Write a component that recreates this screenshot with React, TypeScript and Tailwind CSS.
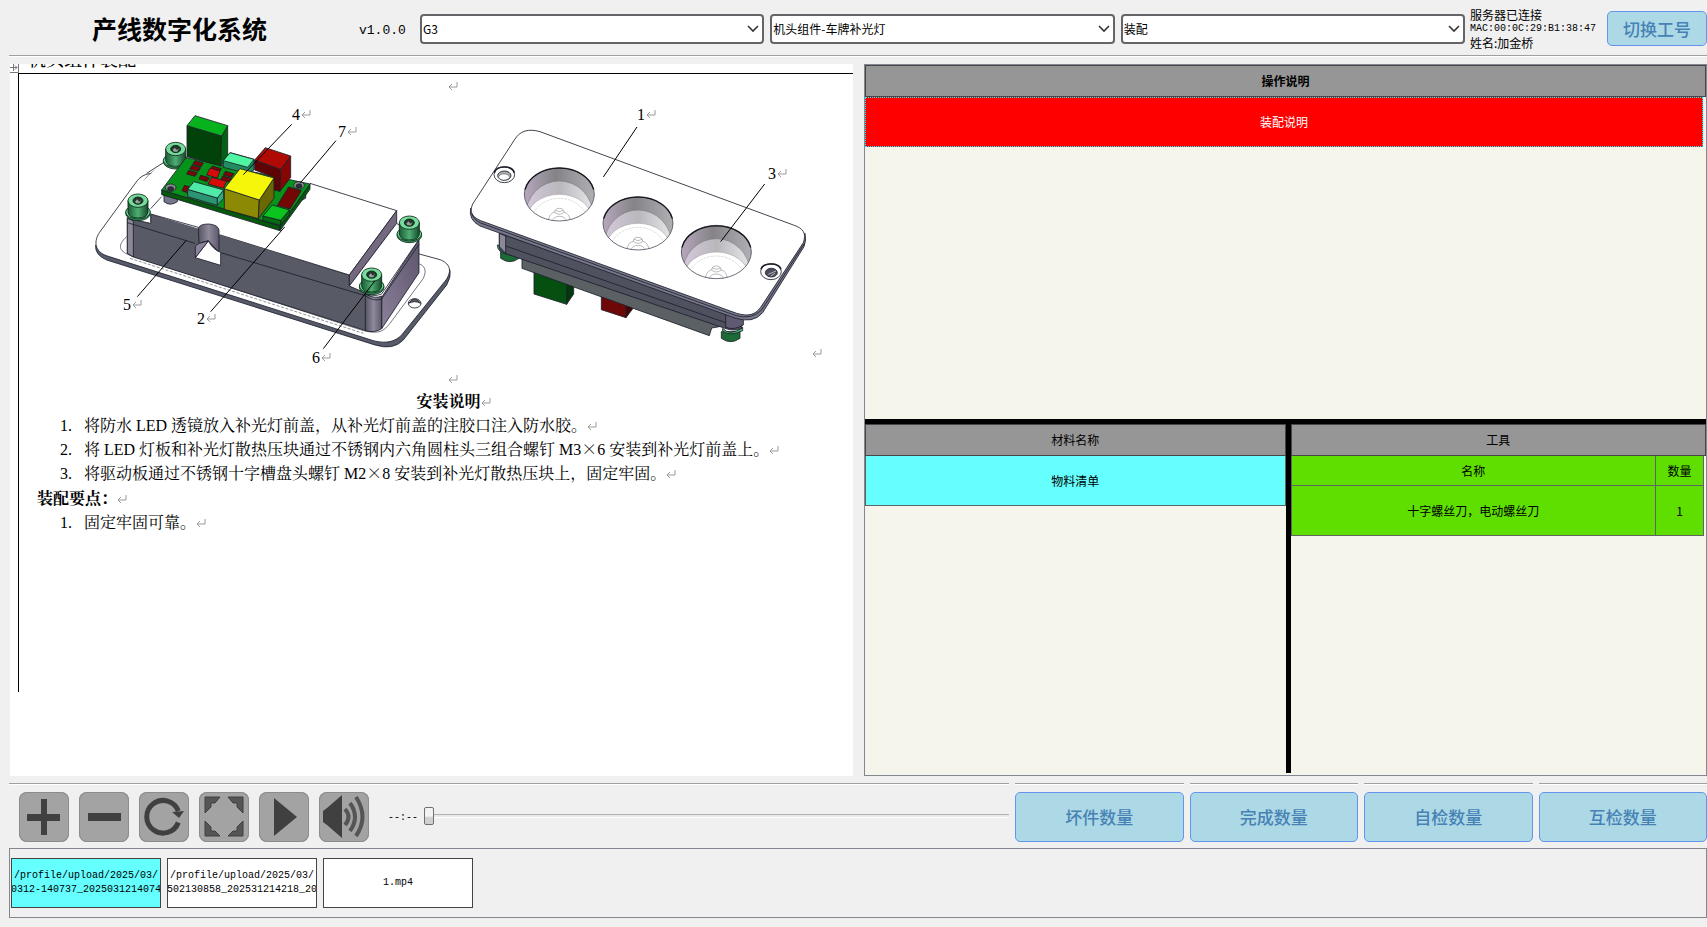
import React from "react";

const sans = "font-['Noto_Sans_CJK_SC',sans-serif]";
const mono = "font-['Liberation_Mono','Noto_Sans_CJK_SC',monospace]";
const serif = "font-['Liberation_Serif','Noto_Serif_CJK_SC','Noto_Sans_CJK_SC',serif]";

function Select({ label, value }: { label: string; value: string }) {
  return (
    <div className="relative min-w-0 flex-1">
      <select
        aria-label={label}
        defaultValue={value}
        className="block h-[30px] w-full appearance-none rounded-[4px] border-2 border-[#646469] bg-white pr-6 pl-px text-xs text-black"
      >
        <option>{value}</option>
      </select>
      <svg className="pointer-events-none absolute top-[11px] right-[5px]" width="12" height="8" viewBox="0 0 12 8" fill="none" stroke="#333" strokeWidth="1.6">
        <path d="M1 1 L6 6 L11 1" />
      </svg>
    </div>
  );
}

function Rule() {
  return <div className="h-[2px] w-full border-t border-[#a0a0a0] bg-white" />;
}

function MarkPath({ x, y }: { x: number; y: number }) {
  return (
    <path d={`M${x + 9} ${y - 4} V${y + 1} H${x + 1} M${x + 4} ${y - 2} L${x + 1} ${y + 1} L${x + 4} ${y + 4}`} fill="none" stroke="#9a9a9a" />
  );
}

function Mark() {
  return (
    <svg className="inline-block" width="11" height="10" viewBox="0 0 11 10">
      <MarkPath x={0} y={4} />
    </svg>
  );
}

function Screw({ x, y }: { x: number; y: number }) {
  return (
    <g transform={`translate(${x} ${y})`} stroke="#0c2416" strokeWidth="2.5">
      <ellipse cx="0" cy="38" rx="37" ry="22" fill="#36a564" />
      <ellipse cx="0" cy="34" rx="37" ry="21" fill="#6fdc98" />
      <path d="M-30 0 V34 Q-28 52 0 52 Q28 52 30 34 V0 Z" fill="url(#screwSide)" />
      <ellipse cx="0" cy="0" rx="30" ry="20" fill="#76dc9c" />
      <ellipse cx="0" cy="0" rx="15" ry="11" fill="#26352d" />
      <path d="M-9 3 L-3 -4 L4 3 L10 -2 L5 8 L-5 8 Z" fill="#8fa69a" stroke="none" />
    </g>
  );
}

function Cup({ x, y, id }: { x: number; y: number; id: string }) {
  return (
    <g transform={`translate(${x} ${y})`} strokeWidth="1.5">
      <clipPath id={id}>
        <ellipse cx="0" cy="0" rx="105" ry="80" />
      </clipPath>
      <g clipPath={`url(#${id})`}>
        <rect x="-106" y="-82" width="212" height="164" fill="url(#cupWall)" />
        <ellipse cx="0" cy="64" rx="101" ry="104" fill="url(#cupMid)" stroke="#777" />
        <ellipse cx="0" cy="76" rx="98" ry="76" fill="#fff" stroke="#999" />
        <ellipse cx="0" cy="88" rx="86" ry="76" fill="none" stroke="#bbb" strokeDasharray="8 3" />
        <path d="M-34 82 Q-30 56 -14 54 Q-14 42 0 42 Q14 42 14 54 Q30 56 34 82 M-22 82 Q-18 66 0 66 Q18 66 22 82 M-14 54 Q0 66 14 54 M-12 48 Q0 56 12 48" fill="none" stroke="#777" />
      </g>
      <ellipse cx="0" cy="0" rx="105" ry="80" fill="none" stroke="#334" strokeWidth="2" />
      <path d="M-103 -14 A105 80 0 0 1 103 -14" fill="none" stroke="#15151a" strokeWidth="4" />
    </g>
  );
}

function HousingView() {
  return (
    <g transform="translate(80 90) scale(0.33333)" stroke="#1c1f2b" strokeWidth="2.5" strokeLinejoin="round">
      <path d="M47 465 Q44 495 80 510 L885 765 Q940 782 970 750 L1100 585 Q1114 560 1110 540 L1080 520 L900 740 L60 480 Z" fill="#575a69" />
      <path d="M222 250 C195 250 180 260 168 277 L58 428 C38 460 48 488 85 499 L880 752 C920 762 945 755 965 735 L1098 570 C1118 540 1108 520 1080 509 L1018 492 L600 330 Z" fill="#fff" />
      <path d="M235 236 Q200 250 182 290 L160 320" fill="none" strokeWidth="1.5" />
      <path d="M140 440 C112 465 116 483 148 495 L850 722 C900 734 912 722 930 700 L1030 565 C1042 540 1032 526 1018 522" fill="none" strokeWidth="1.8" />
      <path d="M150 505 L850 730" fill="none" strokeDasharray="9 5" strokeWidth="1.5" />
      <path d="M142 385 L212 400 V372 L355 412 L418 432 L808 555 V588 L870 612 L858 722 L160 501 L142 490 Z" fill="#585a66" />
      <path d="M142 385 L160 392 V501 L142 490 Z" fill="#8b8998" />
      <path d="M905 622 L1017 448 V548 L905 716 Z" fill="url(#side)" />
      <path d="M856 612 Q885 628 905 618 V716 Q885 730 856 722 Z" fill="url(#column)" />
      <path d="M162 300 L250 215 L690 280 L950 362 L808 555 L212 372 V398 L180 385 Z" fill="#fff" stroke="none" />
      <path d="M690 280 L950 362 L808 555 L418 434 M355 412 L212 372 V398 M142 385 L160 340 M200 250 L255 215 M212 356 L245 320" fill="none" />
      <path d="M950 362 V400 L808 588 V555 Z" fill="#74697f" />
      <path d="M950 400 L1017 448 L905 612 Q880 622 858 610 L808 588 Z" fill="#fff" />
      <path d="M1017 463 L905 627 Q880 636 856 617 L415 486 M345 460 L142 398" fill="none" />
      <path d="M355 414 Q360 402 386 402 Q414 404 417 420 V487 L385 452 L357 460 Z" fill="url(#column)" />
      <path d="M385 453 L346 503 L422 526 V487 Q400 480 385 453 Z" fill="#fff" />
      <path d="M357 460 L346 468 V503 L385 453 Z" fill="#8b829b" />
      <ellipse cx="1004" cy="640" rx="19" ry="14" fill="#fff" />
      <path d="M986 640 Q1004 614 1022 640 Q1004 630 986 640" fill="#666" />
      <Screw x={287} y={177} />
      <path d="M252 310 V335 Q270 350 292 335 V310 Z M655 310 V335 L677 325 V305 Z" fill="#77778a" />
      <path d="M245 300 L600 408 V422 L245 314 Z M600 408 L690 282 V298 L600 422 Z" fill="#045a0a" />
      <path d="M245 300 L318 203 L690 282 L600 408 Z" fill="#07921a" />
      <ellipse cx="272" cy="293" rx="16" ry="11" fill="#8a8f92" />
      <ellipse cx="272" cy="296" rx="9" ry="6" fill="#2c3233" />
      <ellipse cx="657" cy="286" rx="16" ry="11" fill="#8a8f92" />
      <ellipse cx="657" cy="288" rx="9" ry="6" fill="#2c3233" />
      <path d="M321 107 L425 138 L422 228 L321 200 Z" fill="#00420a" />
      <path d="M425 138 L443 107 V208 L422 228 Z" fill="#006312" />
      <path d="M321 107 L345 77 L443 107 L425 138 Z" fill="#08b21c" />
      <path d="M430 212 L450 188 L522 208 V240 L500 250 L430 232 Z" fill="#238b62" />
      <path d="M430 212 L450 188 L522 208 L503 232 Z" fill="#4ff5a0" />
      <g fill="#7c0606">
        <path d="M345 212 L370 219 L363 230 L338 223 Z M336 226 L362 233 L355 244 L329 237 Z M326 241 L352 248 L345 259 L320 252 Z" />
        <path d="M397 228 L424 236 L417 247 L392 240 Z M436 244 L462 251 L455 262 L430 255 Z M428 258 L454 265 L447 276 L422 269 Z M362 256 L388 263 L381 275 L357 267 Z M314 286 L328 290 L322 308 L306 302 Z" />
      </g>
      <path d="M390 234 L420 244 L412 264 L380 255 Z M395 262 L440 274 L430 295 L384 282 Z" fill="#d60c08" />
      <path d="M524 210 L602 238 L600 304 L582 300 V262 L524 240 Z" fill="#5f0404" />
      <path d="M602 238 L632 198 V262 L600 304 Z" fill="#860606" />
      <path d="M524 210 L556 173 L632 198 L602 238 Z" fill="#b00a05" />
      <path d="M323 298 L412 324 V346 L323 320 Z" fill="#2b9470" />
      <path d="M412 324 L431 300 V325 L412 346 Z" fill="#2faa7c" />
      <path d="M323 298 L342 275 L431 300 L412 324 Z" fill="#50eaa8" />
      <path d="M433 296 L538 330 L535 386 L433 358 Z" fill="#8c8a04" />
      <path d="M538 330 L582 264 V325 L535 386 Z" fill="#6a6803" />
      <path d="M433 296 L480 236 L582 264 L538 330 Z" fill="#f6f60a" />
      <path d="M592 346 L626 291 L664 302 L630 357 Z" fill="#740606" />
      <path d="M549 378 L602 391 V406 L549 392 Z M602 391 L628 360 V374 L602 406 Z" fill="#046d0e" />
      <path d="M549 378 L577 345 L628 360 L602 391 Z" fill="#0cc41e" />
      <Screw x={174} y={332} />
      <Screw x={988} y={398} />
      <Screw x={875} y={554} />
      <path d="M635 103 L490 254 M768 152 L660 280 M172 620 L318 452 M392 665 L614 411 M730 776 L885 572" fill="none" stroke="#000" strokeWidth="3" />
    </g>
  );
}

function CoverView() {
  return (
    <g transform="translate(460 90) scale(0.33333)" stroke="#1c1f2b" strokeWidth="2.5" strokeLinejoin="round">
      <path d="M122 482 V505 Q150 525 177 505 V482 Z M784 725 V745 Q812 765 840 745 V725 Z" fill="#1c6a36" />
      <path d="M112 465 Q112 490 150 495 L190 500 V480 Z M788 715 Q810 740 848 712 V722 Q812 740 788 724 Z" fill="#4bb075" />
      <path d="M222 545 L320 575 V643 L222 612 Z" fill="#054f10" />
      <path d="M320 575 L341 580 V612 L320 643 Z" fill="#03380a" />
      <path d="M424 618 L498 640 V683 L424 659 Z" fill="#6e0808" />
      <path d="M498 640 L517 650 V658 L498 683 Z" fill="#460404" />
      <path d="M186 500 L755 690 L800 705 L768 712 L755 714 L748 737 L186 535 Z" fill="#5b6064" />
      <path d="M118 430 L845 680 V715 Q820 725 795 715 L140 492 Q118 485 118 470 Z" fill="#4f515f" />
      <path d="M118 430 L137 438 V490 L118 470 Z" fill="#8b8998" />
      <path d="M797 672 L850 685 V705 Q820 722 797 712 Z" fill="#5f5a72" />
      <path d="M137 468 L797 698" fill="none" />
      <path d="M32 355 Q25 390 60 408 L825 684 Q880 702 908 668 L1032 470 Q1040 450 1035 430 L880 670 L60 390 Z" fill="#77778a" />
      <path d="M240 125 C205 115 180 122 163 150 L38 342 C28 365 35 380 62 392 L830 670 C865 680 885 675 902 652 L1030 458 C1040 430 1030 415 1000 405 Z" fill="#fff" />
      <path d="M35 370 Q40 388 62 399 L828 677 Q875 690 905 660 L1032 462" fill="none" />
      <ellipse cx="133" cy="254" rx="31" ry="24" fill="#fff" />
      <path d="M103 248 Q108 231 133 231 Q158 231 163 248" fill="none" strokeWidth="5" />
      <ellipse cx="133" cy="257" rx="20" ry="14" fill="#aaa" />
      <ellipse cx="132" cy="261" rx="16" ry="9" fill="#fff" strokeWidth="1" />
      <ellipse cx="933" cy="545" rx="31" ry="24" fill="#fff" />
      <path d="M903 538 Q908 522 933 522 Q958 522 963 538" fill="none" strokeWidth="5" />
      <ellipse cx="934" cy="548" rx="18" ry="13" fill="#4c4c5c" />
      <path d="M925 553 L948 543 M932 558 L945 550" stroke="#c6c6d0" />
      <Cup x={298} y={313} id="cupA" />
      <Cup x={534} y={400} id="cupB" />
      <Cup x={769} y={486} id="cupC" />
      <path d="M531 111 L430 261 M914 282 L782 455" fill="none" stroke="#000" strokeWidth="3" />
    </g>
  );
}

const callouts = [
  { n: "4", x: 292, y: 120 },
  { n: "7", x: 338, y: 137 },
  { n: "5", x: 123, y: 310 },
  { n: "2", x: 197, y: 324 },
  { n: "6", x: 312, y: 363 },
  { n: "1", x: 637, y: 120 },
  { n: "3", x: 768, y: 179 },
];

function AssemblyDrawing() {
  return (
    <svg className="block h-auto w-full" viewBox="19 74 834 316" role="img" aria-label="补光灯装配图">
      <defs>
        <linearGradient id="screwSide">
          <stop offset="0" stopColor="#1b5c36" />
          <stop offset="0.5" stopColor="#4fae74" />
          <stop offset="1" stopColor="#164a2b" />
        </linearGradient>
        <linearGradient id="column">
          <stop offset="0" stopColor="#555463" />
          <stop offset="0.5" stopColor="#8f899c" />
          <stop offset="1" stopColor="#5d586a" />
        </linearGradient>
        <linearGradient id="side" x1="0" y1="1" x2="1" y2="0">
          <stop offset="0" stopColor="#8c8099" />
          <stop offset="1" stopColor="#5d556d" />
        </linearGradient>
        <linearGradient id="cupWall">
          <stop offset="0" stopColor="#b7a8bd" />
          <stop offset="0.45" stopColor="#858387" />
          <stop offset="1" stopColor="#b0b0b4" />
        </linearGradient>
        <linearGradient id="cupMid">
          <stop offset="0" stopColor="#d6c9dc" />
          <stop offset="0.5" stopColor="#b9b7bc" />
          <stop offset="1" stopColor="#e6e6e8" />
        </linearGradient>
      </defs>
      <HousingView />
      <CoverView />
      {callouts.map((c) => (
        <g key={c.n}>
          <text x={c.x} y={c.y} fontSize="16" className={serif}>
            {c.n}
          </text>
          <MarkPath x={c.x + 9} y={c.y - 6} />
        </g>
      ))}
      <MarkPath x={448} y={86} />
      <MarkPath x={448} y={379} />
      <MarkPath x={812} y={353} />
    </svg>
  );
}

function Step({ n, children }: { n: number; children: React.ReactNode }) {
  return (
    <li className="flex">
      <span className="w-6 shrink-0">{n}.</span>
      <span className="whitespace-nowrap">
        {children}
        <Mark />
      </span>
    </li>
  );
}

function Times() {
  return <span className="font-['Noto_Serif_CJK_SC','Noto_Sans_CJK_SC',serif] leading-none">×</span>;
}

function DocumentView() {
  return (
    <section className={`${serif} min-w-0 overflow-hidden bg-white text-base leading-[24px] text-black`}>
      <div className="flex h-[9px] overflow-hidden">
        <svg width="9" height="9" viewBox="0 0 9 9" fill="none" stroke="#777">
          <path d="M8.5 0 V8.5 H0 M0 3.5 H7 M3.5 0 V7 M5 1.5 L7 3.5 L5 5.5" />
        </svg>
        <div className="ml-[9px] h-[5px] overflow-hidden">
          <h2 className="-mt-[16px] text-lg leading-[24px] font-medium whitespace-nowrap">机头组件装配·</h2>
        </div>
      </div>
      <div className="ml-2 h-[619px] border-t border-l border-black">
        <AssemblyDrawing />
        <h3 className="pl-9 text-center font-bold">
          安装说明
          <Mark />
        </h3>
        <ol className="pl-[41px]">
          <Step n={1}>将防水 LED 透镜放入补光灯前盖，从补光灯前盖的注胶口注入防水胶。</Step>
          <Step n={2}>
            将 LED 灯板和补光灯散热压块通过不锈钢内六角圆柱头三组合螺钉 M3
            <Times />6 安装到补光灯前盖上。
          </Step>
          <Step n={3}>
            将驱动板通过不锈钢十字槽盘头螺钉 M2
            <Times />8 安装到补光灯散热压块上，固定牢固。
          </Step>
        </ol>
        <h3 className="pt-px pl-[18px] font-bold">
          装配要点：
          <Mark />
        </h3>
        <ol className="pl-[41px]">
          <Step n={1}>固定牢固可靠。</Step>
        </ol>
      </div>
    </section>
  );
}

const headCell = "h-8 border border-[#46464a] bg-[#969696] p-0 text-center";

function InfoPanel() {
  return (
    <section className="flex min-w-0 flex-col border border-[#828790] bg-[#f5f5ec] text-xs text-black">
      <div className="h-[354px]">
        <table className="w-full table-fixed border-separate border-spacing-0">
          <thead>
            <tr>
              <th className={`${headCell} font-bold`}>操作说明</th>
            </tr>
          </thead>
          <tbody>
            <tr>
              <td className="p-0 pr-[3px]">
                <div className="flex h-[50px] items-center justify-center border border-dotted border-[#00ffff] bg-[#ff0000] text-white">装配说明</div>
              </td>
            </tr>
          </tbody>
        </table>
      </div>
      <div className="h-[5px] bg-black" />
      <div className="flex flex-1">
        <div className="w-1/2 shrink-0">
          <table className="w-full table-fixed border-separate border-spacing-0">
            <thead>
              <tr>
                <th className={`${headCell} font-normal`}>材料名称</th>
              </tr>
            </thead>
            <tbody>
              <tr>
                <td className="h-[50px] border-r border-b border-l border-[#5f6464] bg-[#66ffff] p-0 text-center">物料清单</td>
              </tr>
            </tbody>
          </table>
        </div>
        <div className="mb-[2px] w-[5px] shrink-0 bg-black" />
        <div className="min-w-0 flex-1">
          <table className="w-full table-fixed border-separate border-spacing-0">
            <thead>
              <tr>
                <th className={`${headCell} font-normal`}>工具</th>
              </tr>
            </thead>
          </table>
          <table className="w-[calc(100%-2px)] table-fixed border-separate border-spacing-0 bg-[#5fdf00]">
            <thead>
              <tr>
                <th className="h-[30px] border-b border-l border-[#5f6464] p-0 font-normal">名称</th>
                <th className="w-[49px] border-r border-b border-l border-[#5f6464] p-0 font-normal">数量</th>
              </tr>
            </thead>
            <tbody>
              <tr>
                <td className="h-[50px] border-b border-l border-[#5f6464] p-0 text-center">十字螺丝刀，电动螺丝刀</td>
                <td className="border-r border-b border-l border-[#5f6464] p-0 text-center">1</td>
              </tr>
            </tbody>
          </table>
        </div>
      </div>
    </section>
  );
}

const tools: { label: string; icon: React.ReactNode }[] = [
  { label: "放大", icon: <path d="M22 7 H28 V22 H41 V29 H28 V43 H22 V29 H8 V22 H22 Z" /> },
  { label: "缩小", icon: <path d="M9 21 H42 V29 H9 Z" /> },
  {
    label: "旋转",
    icon: (
      <>
        <path d="M39.3 30.5 A16.3 16.3 0 1 1 39.3 19" fill="none" stroke="#404040" strokeWidth="5" />
        <path d="M33 20 L45 19 L40 26 Z" />
      </>
    ),
  },
  {
    label: "全屏",
    icon: <path fill="#555" stroke="#404040" d="M6 5 H21 L16 11 H12 V15 L6 21 Z M29 5 H44 V21 L38 15 V11 H34 Z M6 29 L12 35 V39 H16 L21 44 H6 Z M44 29 V44 H29 L34 39 H38 V35 Z" />,
  },
  { label: "播放", icon: <path d="M15 6 L38 25 L15 44 Z" /> },
  {
    label: "音量",
    icon: (
      <>
        <path d="M4 19 L8 16 L23 3 V46 L8 33 L4 30 Z" />
        <path d="M26 17 Q33 25 26 33 M31 11 Q41 25 31 39 M37 5 Q50 25 37 44" fill="none" stroke="#555" strokeWidth="4" />
      </>
    ),
  },
];

const counters = ["坏件数量", "完成数量", "自检数量", "互检数量"];
const blueButton = "rounded-[5px] border border-[#6495ed] bg-[#add8e6] text-[17px] font-medium text-[#4682b4]";

const files = [
  { lines: ["/profile/upload/2025/03/", "0312-140737_2025031214074"], color: "bg-[#66ffff]" },
  { lines: ["/profile/upload/2025/03/", "502130858_202531214218_20"], color: "bg-white" },
  { lines: ["1.mp4"], color: "bg-white" },
];

export default function App() {
  return (
    <main className={`${sans} flex min-h-screen flex-col bg-[#f0f0f0] text-black`}>
      <header className="flex h-[55px] items-center">
        <h1 className="w-[359px] pt-[2px] text-center text-[25px] font-bold">产线数字化系统</h1>
        <span className={`w-[61px] text-[13px] ${mono} pt-[6px]`}>v1.0.0</span>
        <div className="flex flex-1 gap-[6px] pt-[3px]">
          <Select label="产品" value="G3" />
          <Select label="组件" value="机头组件-车牌补光灯" />
          <Select label="工序" value="装配" />
        </div>
        <div className="ml-[5px] w-[137px] pt-[3px] text-xs leading-[14px] whitespace-nowrap">
          <div>服务器已连接</div>
          <div className={`${mono} text-[10px] leading-[14px]`}>MAC:00:0C:29:B1:38:47</div>
          <div>姓名:加金桥</div>
        </div>
        <button className={`${blueButton} mt-[2px] h-[35px] w-[100px]`}>切换工号</button>
      </header>
      <div className="pl-[9px]">
        <Rule />
      </div>

      <div className="mt-[7px] grid flex-1 grid-cols-2 gap-[11px] pl-[10px]">
        <DocumentView />
        <InfoPanel />
      </div>

      <div className="mt-[7px] flex gap-[6px] pl-[9px]">
        <div className="min-w-0 flex-1">
          <Rule />
          <div className="mt-[7px] flex items-center pl-[10px]">
            <div className="flex shrink-0 gap-[10px]">
              {tools.map((t) => (
                <button key={t.label} aria-label={t.label} className="h-[50px] w-[50px] rounded-[8px] bg-[#a3a3a3] ring-1 ring-[#8c8c8c] ring-inset">
                  <svg width="50" height="50" viewBox="0 0 50 50" fill="#404040">
                    {t.icon}
                  </svg>
                </button>
              ))}
            </div>
            <span className={`ml-[19px] w-9 shrink-0 text-[10px] ${mono}`}>--:--</span>
            <input
              type="range"
              aria-label="播放进度"
              min={0}
              max={100}
              defaultValue={0}
              className="mb-[2px] h-5 min-w-0 flex-1 appearance-none bg-transparent [&::-webkit-slider-runnable-track]:h-1 [&::-webkit-slider-runnable-track]:border-t [&::-webkit-slider-runnable-track]:border-b [&::-webkit-slider-runnable-track]:border-t-[#b0b0b0] [&::-webkit-slider-runnable-track]:border-b-white [&::-webkit-slider-runnable-track]:bg-[#e7eaea] [&::-webkit-slider-thumb]:-mt-2 [&::-webkit-slider-thumb]:h-[18px] [&::-webkit-slider-thumb]:w-[10px] [&::-webkit-slider-thumb]:appearance-none [&::-webkit-slider-thumb]:rounded-[2px] [&::-webkit-slider-thumb]:border [&::-webkit-slider-thumb]:border-[#707070] [&::-webkit-slider-thumb]:bg-linear-to-b [&::-webkit-slider-thumb]:from-[#f3f3f3] [&::-webkit-slider-thumb]:from-50% [&::-webkit-slider-thumb]:to-[#d0d0d0] [&::-webkit-slider-thumb]:to-60%"
            />
          </div>
        </div>
        <div className="grid w-[692px] grid-cols-4 gap-[6px]">
          {counters.map((c) => (
            <div key={c}>
              <Rule />
              <button className={`${blueButton} mt-[7px] h-[50px] w-full`}>{c}</button>
            </div>
          ))}
        </div>
      </div>

      <ul className={`${mono} mt-[6px] mb-[9px] ml-[9px] flex h-[70px] items-center gap-[6px] border border-[#828790] pl-px text-[10px] leading-[14px]`}>
        {files.map((f) => (
          <li
            key={f.lines.join("")}
            className={`${f.color} flex h-[50px] w-[150px] flex-col items-center justify-center overflow-hidden border border-[#444] whitespace-nowrap`}
          >
            {f.lines.map((line) => (
              <span key={line}>{line}</span>
            ))}
          </li>
        ))}
      </ul>
    </main>
  );
}
